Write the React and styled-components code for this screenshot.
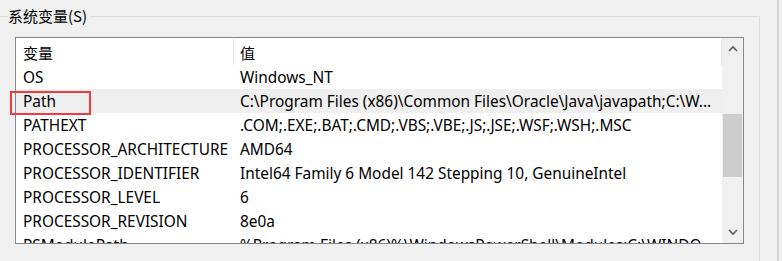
import React from 'react';
import styled, { createGlobalStyle } from 'styled-components';

const GlobalStyle = createGlobalStyle`
  html, body {
    margin: 0;
    padding: 0;
    background: #f0f0f0;
  }
  body {
    font-family: "Noto Sans", "Noto Sans CJK SC", sans-serif;
    font-size: 15px;
    color: #000;
  }
`;

const Window = styled.div`
  box-sizing: border-box;
  width: 779px;
  height: 261px;
  border-right: 2px solid #d4d4d4;
  overflow: hidden;
`;

const Group = styled.div`
  margin: 16px 17px 0 0;
  padding: 0 0 0 15px;
  height: 245px;
  border-top: 1px solid #dcdcdc;
  border-right: 1px solid #dcdcdc;
`;

const Legend = styled.div`
  width: max-content;
  margin: -11px 0 0 -7px;
  padding: 0 4px 0 0;
  height: 20px;
  line-height: 20px;
  background: #f0f0f0;
  font-family: "Noto Sans CJK SC", "Noto Sans", sans-serif;
`;

const ListBox = styled.div`
  box-sizing: border-box;
  display: flex;
  width: 729px;
  height: 207px;
  margin-top: 11px;
  border: 1px solid #828790;
  background: #fff;
`;

const Content = styled.div`
  flex: 1;
  display: flex;
  flex-direction: column;
  min-width: 0;
  clip-path: inset(-6px -6px 0 -8px);
  font-size: 15.4px;
`;

const Header = styled.div`
  display: flex;
  flex: none;
  height: 27px;
  padding-top: 1px;
  box-sizing: border-box;
`;

const HeadCell = styled.div`
  box-sizing: border-box;
  width: ${(p) => (p.$first ? '217px' : 'auto')};
  flex: ${(p) => (p.$first ? 'none' : '1')};
  padding: 2px 0 0 ${(p) => (p.$first ? '7px' : '6px')};
  line-height: 24px;
  font-size: 15px;
  border-left: ${(p) => (p.$first ? 'none' : '1px solid #e5e5e5')};
  border-right: ${(p) => (p.$first ? 'none' : '1px solid #e5e5e5')};
  font-family: "Noto Sans CJK SC", "Noto Sans", sans-serif;
`;

const Row = styled.div`
  position: relative;
  display: flex;
  flex: none;
  height: 24px;
  background: ${(p) => (p.$hover ? '#efefef' : 'transparent')};
`;

const Cell = styled.div`
  box-sizing: border-box;
  width: ${(p) => (p.$first ? '217px' : 'auto')};
  flex: ${(p) => (p.$first ? 'none' : '1')};
  min-width: 0;
  height: 24px;
  padding: ${(p) => (p.$first ? '2px 0 0 7px' : '2px 4px 0 7px')};
  line-height: 22px;
  white-space: nowrap;
  overflow: hidden;
  text-overflow: ${(p) => (p.$first ? 'clip' : 'ellipsis')};
`;

const Mark = styled.div`
  position: absolute;
  left: -6px;
  top: 2px;
  width: 81px;
  height: 24px;
  box-sizing: border-box;
  border: 2px solid #ef3b3b;
  pointer-events: none;
`;

const ScrollBar = styled.div`
  flex: none;
  width: 21px;
  display: flex;
  flex-direction: column;
  background: #f0f0f0;
`;

const Arrow = styled.div`
  flex: none;
  height: 21px;
  display: flex;
  align-items: center;
  justify-content: center;
`;

const Track = styled.div`
  flex: 1;
  padding: 55px 1px 0;
`;

const Thumb = styled.div`
  height: 63px;
  background: #cdcdcd;
`;

const Chevron = ({ up }) => (
  <svg width="10" height="7" viewBox="0 0 10 7">
    <polyline
      points={up ? '1,6 5,2 9,6' : '1,1 5,5 9,1'}
      fill="none"
      stroke="#606060"
      strokeWidth="1.7"
    />
  </svg>
);

const rows = [
  ['OS', 'Windows_NT'],
  ['Path', 'C:\\Program Files (x86)\\Common Files\\Oracle\\Java\\javapath;C:\\W...', true],
  ['PATHEXT', '.COM;.EXE;.BAT;.CMD;.VBS;.VBE;.JS;.JSE;.WSF;.WSH;.MSC'],
  ['PROCESSOR_ARCHITECTURE', 'AMD64'],
  ['PROCESSOR_IDENTIFIER', 'Intel64 Family 6 Model 142 Stepping 10, GenuineIntel'],
  ['PROCESSOR_LEVEL', '6'],
  ['PROCESSOR_REVISION', '8e0a'],
  ['PSModulePath', '%Program Files (x86)%\\WindowsPowerShell\\Modules;C:\\WINDO...'],
];

export default function App() {
  return (
    <>
      <GlobalStyle />
      <Window>
        <Group>
          <Legend>系统变量(S)</Legend>
          <ListBox>
            <Content>
              <Header>
                <HeadCell $first>变量</HeadCell>
                <HeadCell>值</HeadCell>
              </Header>
              {rows.map(([name, value, marked]) => (
                <Row key={name} $hover={marked}>
                  <Cell $first>{name}</Cell>
                  <Cell>{value}</Cell>
                  {marked && <Mark />}
                </Row>
              ))}
            </Content>
            <ScrollBar>
              <Arrow>
                <Chevron up />
              </Arrow>
              <Track>
                <Thumb />
              </Track>
              <Arrow>
                <Chevron />
              </Arrow>
            </ScrollBar>
          </ListBox>
        </Group>
      </Window>
    </>
  );
}
